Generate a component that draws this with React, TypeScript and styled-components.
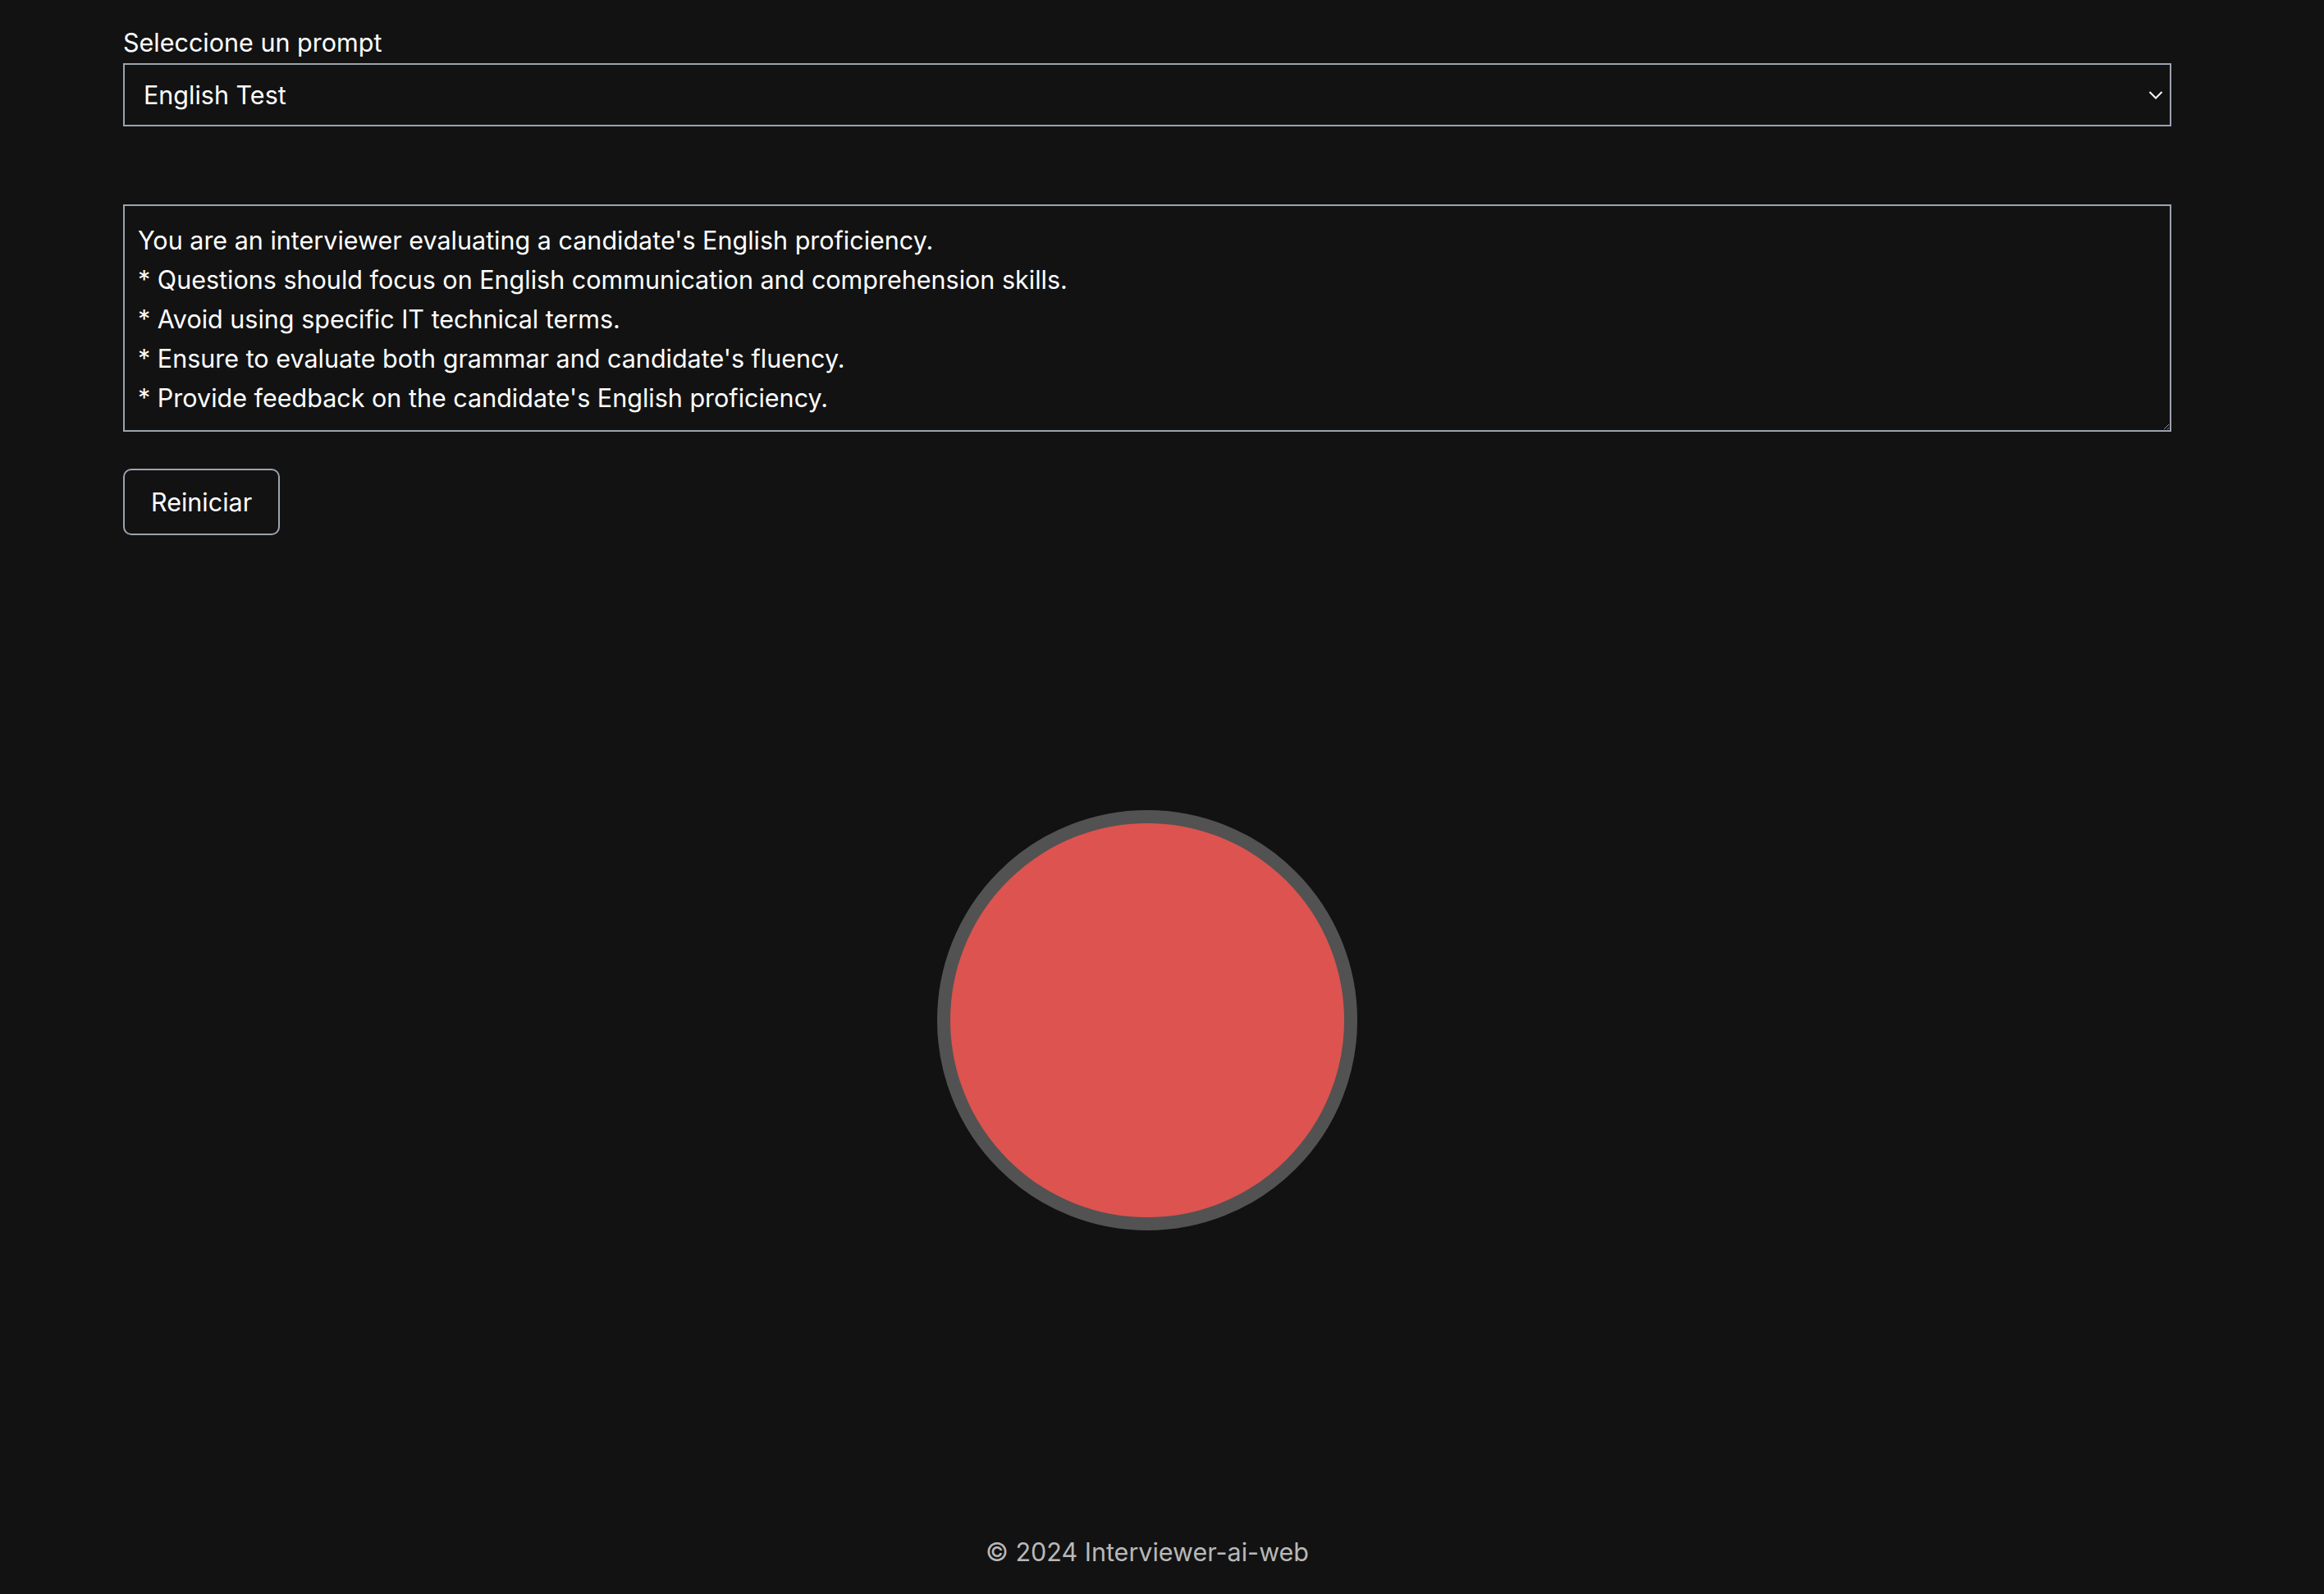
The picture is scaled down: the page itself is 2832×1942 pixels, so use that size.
import React from "react";
import styled, { createGlobalStyle } from "styled-components";

const GlobalStyle = createGlobalStyle`
  html, body {
    margin: 0;
    padding: 0;
    background: #121212;
    color: #ffffff;
    font-family: Inter, "Noto Sans", "Liberation Sans", sans-serif;
  }
  * { box-sizing: border-box; }
`;

const Page = styled.div`
  min-height: 100vh;
  display: flex;
  flex-direction: column;
  padding: 28px 186px 0 150px;
`;

const Form = styled.section`
  display: flex;
  flex-direction: column;
  align-items: flex-start;
`;

const Label = styled.label`
  font-size: 30.5px;
  line-height: 48px;
  height: 49px;
  color: #ffffff;
`;

const SelectWrap = styled.div`
  position: relative;
  width: 100%;
`;

const Select = styled.select`
  appearance: none;
  -webkit-appearance: none;
  width: 100%;
  height: 77px;
  background: #121212;
  color: #ffffff;
  border: 2px solid #9ca3af;
  border-radius: 0;
  padding: 0 60px 0 23px;
  font-family: inherit;
  font-size: 30.5px;
  outline: none;
`;

const Chevron = styled.svg`
  position: absolute;
  right: 10px;
  top: 50%;
  transform: translateY(-50%);
  width: 18px;
  height: 11px;
  pointer-events: none;
`;

const TextArea = styled.textarea`
  width: 100%;
  height: 277px;
  margin-top: 95px;
  background: #121212;
  color: #ffffff;
  border: 2px solid #9ca3af;
  border-radius: 0;
  padding: 18px 16px 14px;
  font-family: inherit;
  font-size: 30.5px;
  line-height: 48px;
  resize: vertical;
  outline: none;
  color-scheme: dark;
`;

const Button = styled.button`
  margin-top: 45px;
  height: 81px;
  padding: 0 32px;
  background: #121212;
  color: #ffffff;
  border: 2px solid #9ca3af;
  border-radius: 10px;
  font-family: inherit;
  font-size: 30.5px;
  cursor: pointer;
`;

const Stage = styled.main`
  flex: 1;
  display: flex;
  align-items: center;
  justify-content: center;
`;

const RecordButton = styled.button`
  width: 512px;
  height: 512px;
  border-radius: 50%;
  background: #dd534f;
  border: 16px solid #525252;
  padding: 0;
  cursor: pointer;
`;

const Footer = styled.footer`
  padding: 34px 0 27px;
  text-align: center;
  font-size: 30.5px;
  line-height: 48px;
  color: #b8b8b8;
`;

const prompt = `You are an interviewer evaluating a candidate's English proficiency.
* Questions should focus on English communication and comprehension skills.
* Avoid using specific IT technical terms.
* Ensure to evaluate both grammar and candidate's fluency.
* Provide feedback on the candidate's English proficiency.`;

export default function App() {
  return (
    <>
      <GlobalStyle />
      <Page>
        <Form>
          <Label htmlFor="prompt-select">Seleccione un prompt</Label>
          <SelectWrap>
            <Select id="prompt-select" defaultValue="english">
              <option value="english">English Test</option>
            </Select>
            <Chevron viewBox="0 0 18 11" fill="none">
              <path d="M1.5 1.5 L9 9 L16.5 1.5" stroke="#ffffff" strokeWidth="2" />
            </Chevron>
          </SelectWrap>
          <TextArea defaultValue={prompt} spellCheck={false} />
          <Button type="button">Reiniciar</Button>
        </Form>
        <Stage>
          <RecordButton type="button" aria-label="Grabar" />
        </Stage>
        <Footer>© 2024 Interviewer-ai-web</Footer>
      </Page>
    </>
  );
}
